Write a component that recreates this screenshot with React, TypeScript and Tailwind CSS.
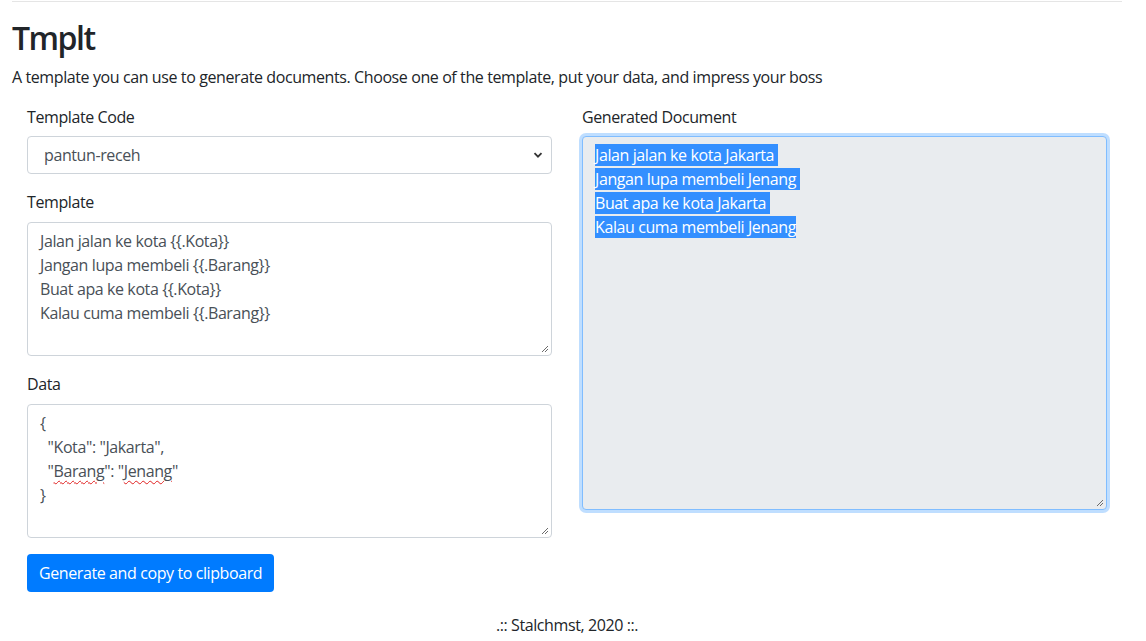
import React from 'react'

const font = { fontFamily: '"Open Sans", "Noto Sans", sans-serif' }

function Grip() {
  return (
    <svg className="absolute bottom-[2px] right-[2px]" width="8" height="8" viewBox="0 0 8 8">
      <path d="M7 1 L1 7 M7 4 L4 7" stroke="#6b6b6b" strokeWidth="1" />
    </svg>
  )
}

function Box({ lines, h, className }: { lines: React.ReactNode[]; h: string; className?: string }) {
  return (
    <div className={`relative rounded border border-[#ced4da] bg-white px-3 py-[6px] text-[#495057] leading-6 ${h} ${className ?? ''}`}>
      {lines.map((l, i) => (
        <div key={i} className="whitespace-pre">
          {l}
        </div>
      ))}
      <Grip />
    </div>
  )
}

const squiggle = 'underline decoration-wavy decoration-[#e02020] decoration-1 underline-offset-[3px]'

export default function App() {
  const generated = ['Jalan jalan ke kota Jakarta ', 'Jangan lupa membeli Jenang ', 'Buat apa ke kota Jakarta ', 'Kalau cuma membeli Jenang']

  return (
    <div className="min-h-screen bg-white text-[16px] tracking-[-0.4px] text-[#212529] leading-6" style={font}>
      <div className="ml-[12px] w-[1110px]">
        <div className="mt-[1px] border-t border-[#e5e5e5]" />
        <h1 className="mt-[17px] mb-2 text-[32px] font-semibold tracking-[-1.5px] leading-[38px]">Tmplt</h1>
        <p className="mb-4">A template you can use to generate documents. Choose one of the template, put your data, and impress your boss</p>

        <div className="grid grid-cols-2">
          <div className="px-[15px]">
            <div className="mb-4">
              <label className="mb-[7px] block">Template Code</label>
              <div className="flex h-[38px] items-center justify-between rounded border border-[#ced4da] bg-white pl-4 pr-2 text-[#495057]">
                <span>pantun-receh</span>
                <svg width="10" height="10" viewBox="0 0 10 10">
                  <path d="M1.5 3.2 L5 6.7 L8.5 3.2" fill="none" stroke="#333" strokeWidth="1.8" />
                </svg>
              </div>
            </div>
            <div className="mb-4">
              <label className="mb-2 block">Template</label>
              <Box
                h="h-[134px]"
                lines={['Jalan jalan ke kota {{.Kota}}', 'Jangan lupa membeli {{.Barang}}', 'Buat apa ke kota {{.Kota}}', 'Kalau cuma membeli {{.Barang}}']}
              />
            </div>
            <div className="mb-4">
              <label className="mb-2 block">Data</label>
              <Box
                h="h-[134px]"
                lines={[
                  '{',
                  '  "Kota": "Jakarta",',
                  <>
                    {'  "'}
                    <span className={squiggle}>Barang</span>
                    {'": "'}
                    <span className={squiggle}>Jenang</span>
                    {'"'}
                  </>,
                  '}',
                ]}
              />
            </div>
            <button className="h-[38px] rounded bg-[#007bff] px-3 text-white">Generate and copy to clipboard</button>
          </div>

          <div className="px-[15px]">
            <label className="mb-[7px] block">Generated Document</label>
            <div className="relative h-[374px] rounded border border-[#80bdff] bg-[#e9ecef] px-3 py-[6px] leading-6 shadow-[0_0_0_3px_rgba(0,123,255,0.25)]">
              {generated.map((l, i) => (
                <div key={i}>
                  <span className="whitespace-pre bg-[#338fff] text-white">{l}</span>
                </div>
              ))}
              <Grip />
            </div>
          </div>
        </div>

        <footer className="mt-[21px] text-center">.:: Stalchmst, 2020 ::.</footer>
      </div>
    </div>
  )
}
